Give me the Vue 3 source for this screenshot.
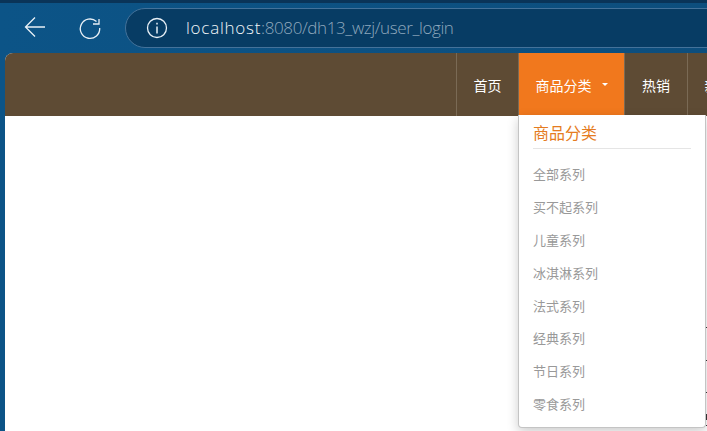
<script setup>
const items = ['全部系列', '买不起系列', '儿童系列', '冰淇淋系列', '法式系列', '经典系列', '节日系列', '零食系列']
const ticks = [{ y: 211, h: 1 }, { y: 244, h: 1 }, { y: 276, h: 1 }, { y: 298, h: 6 }, { y: 309, h: 1 }]
</script>

<template>
  <div class="frame">
    <header class="chrome">
      <svg class="ico back" width="26" height="24" viewBox="0 0 26 24"><path d="M21 11H1.500M11 1.500 1.500 11l9.500 9.500" fill="none" stroke="#e8f0f6" stroke-width="1.300"/></svg>
      <svg class="ico reload" width="24" height="24" viewBox="0 0 24 24"><path d="M18.500 5.500A9.700 9.700 0 1 0 21.700 12M21 3v5h-6" fill="none" stroke="#e8f0f6" stroke-width="1.300"/></svg>
      <div class="address">
        <svg width="22" height="22" viewBox="0 0 22 22"><circle cx="11" cy="11" r="9.500" fill="none" stroke="#e8f0f6" stroke-width="1.300"/><path d="M11 9.500v7M11 5.800v1.600" stroke="#e8f0f6" stroke-width="1.500"/></svg>
        <span class="url"><span class="host">localhost</span>:8080/dh13_wzj/user_login</span>
      </div>
    </header>
    <main class="page">
      <nav class="nav">
        <a class="tab home">首页</a>
        <a class="tab active">商品分类<i class="caret"></i></a>
        <a class="tab hot">热销</a>
        <a class="tab">新品</a>
      </nav>
      <div class="body">
        <div class="menu">
          <h4>商品分类</h4>
          <ul>
            <li v-for="item in items" :key="item">{{ item }}</li>
          </ul>
        </div>
        <i v-for="t in ticks" :key="t.y" class="tick" :style="{ top: t.y + 'px', height: t.h + 'px' }"></i>
      </div>
    </main>
  </div>
</template>

<style>
html, body { margin: 0; overflow: hidden; }
</style>

<style scoped>
.frame { width: 707px; height: 431px; overflow: hidden; display: flex; flex-direction: column; background: linear-gradient(90deg, #0c5487, #0d4e7d); font-family: "Liberation Sans", "Noto Sans CJK SC", sans-serif; }
.chrome { height: 53px; flex: none; box-sizing: border-box; border-top: 3px solid #0a3458; padding: 5px 0 0 24px; display: flex; align-items: flex-start; }
.ico { display: block; flex: none; margin-top: 8px; }
.reload { margin-left: 28px; }
.address { margin-left: 23px; width: 620px; flex: none; height: 40px; box-sizing: border-box; border: 1px solid #44729a; border-radius: 20px; background: #073c64; display: flex; align-items: center; padding-left: 20px; }
.url { margin-left: 18px; font: 300 17px/20px "Open Sans", "Liberation Sans", sans-serif; color: #8fa8bd; letter-spacing: -0.4px; }
.host { color: #f2f6f9; letter-spacing: 0.75px; }
.page { flex: 1; margin-left: 5px; background: #fff; border-radius: 8px 0 0 0; overflow: hidden; display: flex; flex-direction: column; }
.nav { height: 63px; flex: none; background: #5e4b34; display: flex; padding-left: 451px; }
.tab { box-sizing: border-box; width: 62px; flex: none; border-left: 1px solid #7a6a55; color: #fff; font-size: 14px; display: flex; align-items: center; justify-content: center; }
.active { width: 106px; background: #f1781d; }
.hot { width: 63px; }
.caret { width: 0; height: 0; margin-left: 10px; border: 3px solid transparent; border-top-color: #fff; border-bottom: 0; }
.body { flex: 1; position: relative; }
.tick { position: absolute; right: 0; width: 1px; background: #333; }
.menu { position: absolute; left: 513px; top: -1px; width: 188px; height: 313px; box-sizing: border-box; background: #fff; border: 1px solid #c4c4c4; border-top: 0; border-radius: 0 0 4px 4px; box-shadow: 0 4px 12px rgba(0, 0, 0, .2); padding: 9px 14px 0; }
h4 { margin: 0; font-weight: 400; font-size: 16px; line-height: 20px; color: #e57c21; padding-bottom: 4px; border-bottom: 1px solid #e5e5e5; }
ul { list-style: none; margin: 12px 0 0; padding: 0; }
li { height: 32.900px; line-height: 27px; font-size: 13px; color: #999; }
</style>
